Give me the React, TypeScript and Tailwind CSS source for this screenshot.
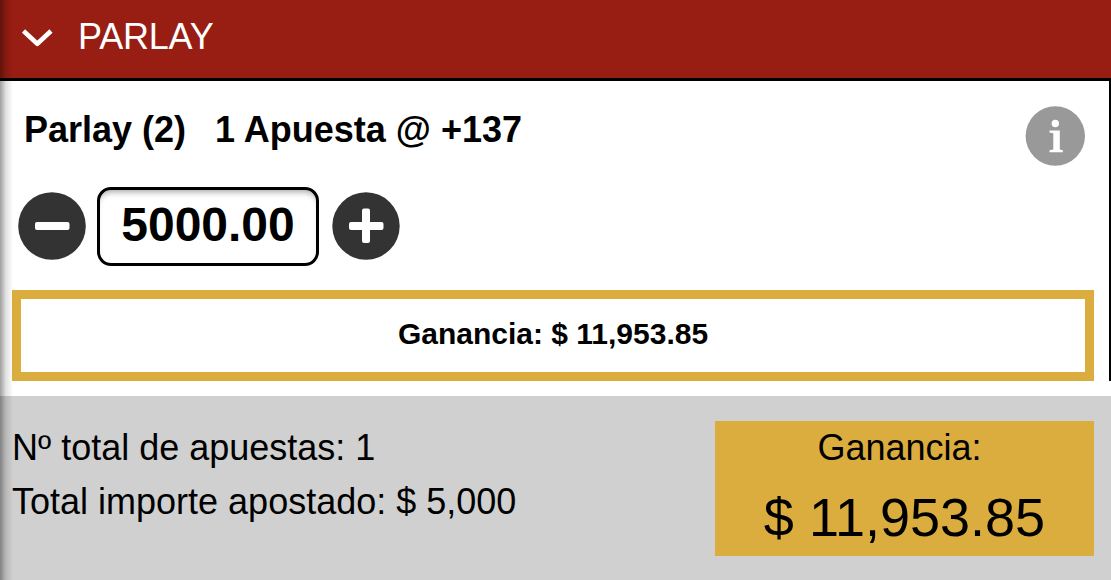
export default function App() {
  return (
    <div className="relative flex h-[580px] w-[1111px] flex-col overflow-hidden bg-white font-['Liberation_Sans',Arial,sans-serif] text-black">
      <header className="flex h-[81px] items-start border-b-[3px] border-black bg-[#981d13] pl-[22px]">
        <svg className="mt-[28px] h-[20px] w-[31px]" viewBox="0 0 31 20" fill="none" stroke="white" strokeWidth="4.6" strokeLinejoin="round">
          <path d="M1.500 3 15.300 15.800 29 3" />
        </svg>
        <h1 className="ml-[25px] mt-[16px] text-[36px] leading-[42px] tracking-[-0.2px] text-white">PARLAY</h1>
      </header>
      <main className="h-[300px] border-r-[2px] border-black">
        <div className="flex justify-between pl-[24px] pr-[24px]">
          <h2 className="mt-[28px] flex whitespace-pre text-[36px] font-bold leading-[42px]">
            <span>Parlay (2)</span>
            <span className="ml-[29px]">1 Apuesta @ +137</span>
          </h2>
          <svg className="mt-[25px] size-[60px]" viewBox="0 0 60 60">
            <circle cx="30.300" cy="30" r="29.700" fill="#999" />
            <circle cx="30.300" cy="17.500" r="3.700" fill="white" />
            <path fill="white" d="M24.500 24.500H34.800V43.500L37.800 44.300V46.200H24.500V44.300L28.300 43.500V27.200L24.500 26.500Z" />
          </svg>
        </div>
        <div className="mt-[21px] flex items-start pl-[18px]">
          <svg className="mt-[5px] size-[68px]" viewBox="0 0 68 68">
            <circle cx="34" cy="34" r="33.800" fill="#333" />
            <rect x="17" y="30" width="34.500" height="8" rx="2" fill="white" />
          </svg>
          <div className="ml-[11px] flex h-[79px] w-[222px] items-center justify-center rounded-[14px] border-[3px] border-black pb-[4px] text-[48px] font-bold shadow-[inset_0_6px_6px_-4px_rgba(0,0,0,0.35)]">5000.00</div>
          <svg className="ml-[13px] mt-[5px] size-[68px]" viewBox="0 0 68 68">
            <circle cx="34" cy="34" r="33.700" fill="#333" />
            <rect x="17" y="30" width="34.500" height="8" rx="2" fill="white" />
            <rect x="30" y="16.500" width="8" height="34.500" rx="2" fill="white" />
          </svg>
        </div>
        <div className="ml-[12px] mt-[24px] flex h-[91px] w-[1082px] items-center justify-center border-[9px] border-[#dbad3e] pb-[4px] text-[30px] font-bold">Ganancia: $ 11,953.85</div>
      </main>
      <footer className="mt-[15px] flex flex-1 justify-between bg-[#d0d0d0] pl-[12px] pr-[17px]">
        <div className="mt-[25px] text-[36px] leading-[54px]">
          <p>Nº total de apuestas: 1</p>
          <p>Total importe apostado: $ 5,000</p>
        </div>
        <div className="mt-[25px] h-[135px] w-[379px] bg-[#dbad3e] text-center">
          <p className="mt-[6px] whitespace-pre text-[36px] leading-[42px]">{'Ganancia: '}</p>
          <p className="mt-[18px] text-[54px] leading-[60px]">$ 11,953.85</p>
        </div>
      </footer>
      <div className="absolute left-0 top-0 h-full w-[13px] bg-gradient-to-r from-black/38 via-black/12 via-45% to-transparent" />
    </div>
  );
}
